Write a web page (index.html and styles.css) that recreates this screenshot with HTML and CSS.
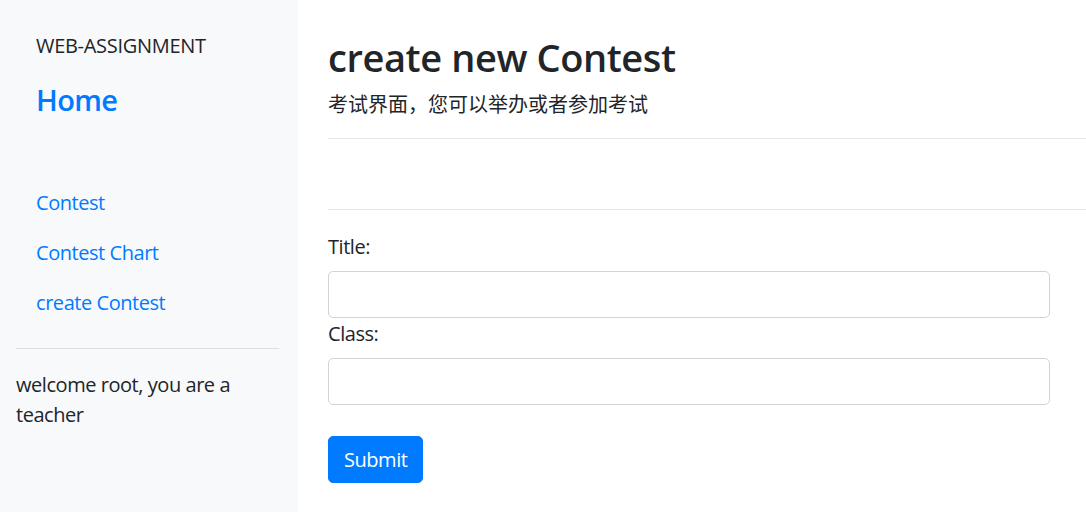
FILE: index.html
```html
<!DOCTYPE html>
<html lang="zh">
<head>
<meta charset="utf-8">
<title>create new Contest</title>
<link rel="stylesheet" href="styles.css">
</head>
<body>
<div class="layout">
  <aside class="sidebar">
    <div class="brand">WEB-ASSIGNMENT</div>
    <a class="home" href="#">Home</a>
    <nav class="nav">
      <a class="nav-link" href="#">Contest</a>
      <a class="nav-link" href="#">Contest Chart</a>
      <a class="nav-link" href="#">create Contest</a>
    </nav>
    <hr class="side-rule">
    <p class="welcome">welcome root, you are a teacher</p>
  </aside>
  <main class="main">
    <h1 class="title">create new Contest</h1>
    <p class="lead">考试界面，您可以举办或者参加考试</p>
    <hr class="rule rule-first">
    <hr class="rule rule-second">
    <form class="form">
      <label class="label" for="title">Title:</label>
      <input class="input" id="title" type="text">
      <label class="label label-next" for="cls">Class:</label>
      <input class="input" id="cls" type="text">
      <button class="btn" type="button">Submit</button>
    </form>
  </main>
</div>
</body>
</html>
```

FILE: styles.css
```css
* { box-sizing: border-box; }
html, body { margin: 0; padding: 0; }
body {
  font-family: "Open Sans", "Noto Sans CJK SC", sans-serif;
  font-size: 20px;
  line-height: 30px;
  letter-spacing: -0.45px;
  color: #212529;
  background: #fff;
}
.layout {
  display: flex;
  min-height: 512px;
}
.sidebar {
  width: 298px;
  flex: 0 0 298px;
  background: #f8f9fa;
  padding: 31px 19px 0 16px;
  display: flex;
  flex-direction: column;
}
.brand {
  padding-left: 20px;
  font-size: 20px;
  line-height: 30px;
  letter-spacing: -0.3px;
  color: #212529;
}
.home {
  padding-left: 20px;
  margin-top: 22px;
  font-size: 29px;
  line-height: 34px;
  font-weight: 600;
  letter-spacing: -0.6px;
  color: #007bff;
  text-decoration: none;
}
.nav {
  display: flex;
  flex-direction: column;
  margin-top: 61px;
}
.nav-link {
  padding: 10px 20px;
  color: #007bff;
  text-decoration: none;
  line-height: 30px;
}
.side-rule {
  margin: 20px 0 21px;
  border: 0;
  border-top: 1px solid rgba(0,0,0,0.1);
  height: 0;
}
.welcome {
  margin: 0;
  width: 240px;
}
.main {
  flex: 1;
  padding-left: 30px;
  padding-top: 33px;
  display: flex;
  flex-direction: column;
}
.title {
  margin: 0;
  font-size: 38px;
  line-height: 48px;
  font-weight: 600;
  letter-spacing: -0.4px;
}
.lead {
  margin: 9px 0 0;
  letter-spacing: 0;
}
.rule {
  margin: 0;
  border: 0;
  border-top: 1px solid rgba(0,0,0,0.1);
  height: 0;
}
.rule-first { margin-top: 18px; }
.rule-second { margin-top: 70px; }
.form {
  margin-top: 22px;
  margin-right: 36px;
  display: flex;
  flex-direction: column;
  align-items: flex-start;
}
.label {
  display: block;
  margin-bottom: 9px;
}
.label-next { margin-top: 1px; }
.input {
  display: block;
  width: 100%;
  height: 47px;
  padding: 7px 15px;
  font: inherit;
  border: 1px solid #ced4da;
  border-radius: 5px;
  background: #fff;
}
.btn {
  margin-top: 31px;
  font: inherit;
  letter-spacing: inherit;
  color: #fff;
  background: #007bff;
  border: 1px solid #007bff;
  border-radius: 5px;
  padding: 7px 15px;
  height: 47px;
  line-height: 30px;
}
```
